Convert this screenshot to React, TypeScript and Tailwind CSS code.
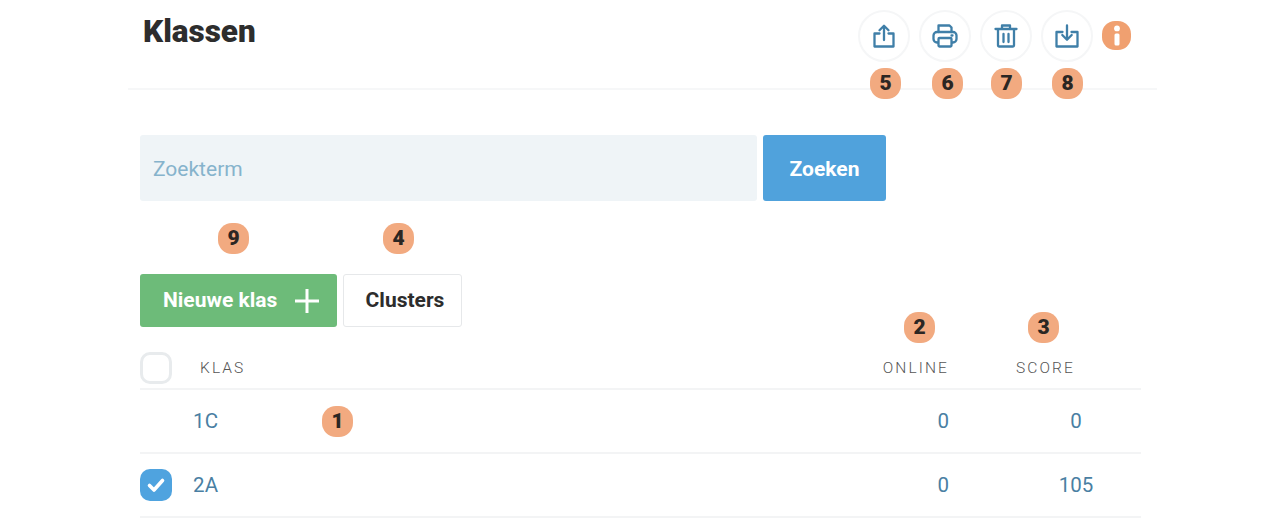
const Badge = ({ n, x, y }: { n: number; x: number; y: number }) => (
  <div
    className="absolute flex h-[31px] w-[31px] items-center justify-center rounded-[14px] bg-[#f2aa80] font-['Roboto',sans-serif] text-[21px] font-black leading-none text-[#2b2623]"
    style={{ left: x, top: y }}
  >
    {n}
  </div>
);

const IconCircle = ({ children }: { children: React.ReactNode }) => (
  <div className="flex h-[52px] w-[52px] items-center justify-center rounded-full border-2 border-[#f5f6f7] text-[#3f7fa8]">
    {children}
  </div>
);

const Svg = ({ children }: { children: React.ReactNode }) => (
  <svg width="26" height="26" viewBox="0 0 26 26" fill="none" stroke="currentColor" strokeWidth="2.3" strokeLinecap="round" strokeLinejoin="round">
    {children}
  </svg>
);

const Row = ({ name, online, score, checked }: { name: string; online: string; score: string; checked?: boolean }) => (
  <div className="flex h-[64px] items-center border-b-2 border-[#f3f4f5] text-[20.5px] text-[#4a7fa3]">
    <div className="w-[53px] shrink-0">
      {checked && (
        <div className="flex h-[32px] w-[32px] items-center justify-center rounded-[10px] bg-[#4fa3df]">
          <svg width="20" height="20" viewBox="0 0 20 20" fill="none" stroke="#fff" strokeWidth="3.6" strokeLinecap="round" strokeLinejoin="round">
            <path d="M3.5 10.5 8 15l8.5-9.5" />
          </svg>
        </div>
      )}
    </div>
    <div className="flex-1 tracking-[0.2px]">{name}</div>
    <div className="w-[40px] text-right">{online}</div>
    <div className="ml-[109px] w-[36px] text-center">{score}</div>
    <div className="w-[47px]" />
  </div>
);

export default function App() {
  return (
    <div className="relative h-[528px] w-[1280px] overflow-hidden bg-white font-['Roboto',sans-serif]">
      <header className="ml-[128px] flex h-[90px] w-[1029px] items-start border-b-2 border-[#f6f7f8] pl-[15px]">
        <h1 className="mt-[12px] text-[31.5px] font-black leading-[40px] text-[#2d2d2d]">Klassen</h1>
        <div className="ml-auto mt-[10px] flex items-start gap-[9px] pr-[26px]">
          <IconCircle>
            <Svg>
              <path d="M8.5 10.5H3.5v13h19v-13h-5" />
              <path d="M13 17V3M8.5 7.2 13 2.8l4.5 4.4" />
            </Svg>
          </IconCircle>
          <IconCircle>
            <Svg>
              <path d="M6.5 9V2.5h11l2 2V9" />
              <rect x="1.5" y="9" width="23" height="10.5" rx="3.5" />
              <rect x="6.5" y="15" width="13" height="8.5" rx="1" fill="#fff" />
              <path d="M19.5 12.5h1" />
            </Svg>
          </IconCircle>
          <IconCircle>
            <Svg>
              <path d="M2.5 6h21M9 6V2.5h8V6M5 6v16.5a1 1 0 0 0 1 1h14a1 1 0 0 0 1-1V6M10.5 11v8M15.5 11v8" />
            </Svg>
          </IconCircle>
          <IconCircle>
            <Svg>
              <path d="M8.5 9H2.5v14.5h21V9h-6" />
              <path d="M13 2.5V16.5M8.3 12 13 16.7l4.7-4.7" />
            </Svg>
          </IconCircle>
          <div className="mt-[11px] flex h-[29px] w-[29px] items-center justify-center rounded-[13px] bg-[#f0a070]">
            <svg width="8" height="21" viewBox="0 0 8 21" fill="#fff">
              <circle cx="4" cy="3.4" r="2.9" />
              <rect x="1.5" y="8.5" width="5" height="12" rx="1.5" />
            </svg>
          </div>
        </div>
      </header>

      <main className="ml-[140px] w-[1001px]">
        <div className="mt-[45px] flex gap-[6px]">
          <div className="flex h-[66px] w-[617px] items-center rounded-[3px] bg-[#eff4f7] pl-[13px] pt-[3px] text-[21px] text-[#86b3cc]">Zoekterm</div>
          <button className="h-[66px] w-[123px] rounded-[3px] bg-[#50a2dc] pt-[3px] text-[21px] font-bold text-white">Zoeken</button>
        </div>
        <div className="mt-[73px] flex gap-[6px]">
          <button className="flex h-[53px] w-[197px] items-center rounded-[3px] bg-[#6dbb79] pl-[23px] text-[21px] font-bold text-white">
            <span className="pt-[1px]">Nieuwe klas</span>
            <svg className="ml-[17px]" width="26" height="26" viewBox="0 0 26 26" stroke="#fff" strokeWidth="3">
              <path d="M13 1v24M1 13h24" />
            </svg>
          </button>
          <button className="h-[53px] w-[119px] rounded-[3px] border border-[#e6e8ea] bg-white pl-[5px] pt-[1px] text-[21px] font-bold text-[#2d2d2d]">Clusters</button>
        </div>
        <div className="mt-[25px] flex h-[38px] items-start border-b-2 border-[#f3f4f5] text-[15.5px] font-light tracking-[2.1px] text-[#555]">
          <div className="h-[32px] w-[32px] shrink-0 rounded-[10px] border-[3px] border-[#e8ebed]" />
          <div className="ml-[28px] flex-1 pt-[5px]">KLAS</div>
          <div className="pt-[5px]">ONLINE</div>
          <div className="ml-[67px] w-[125px] pt-[5px]">SCORE</div>
        </div>
        <Row name="1C" online="0" score="0" />
        <Row name="2A" online="0" score="105" checked />
      </main>

      <Badge n={5} x={870} y={68} />
      <Badge n={6} x={932} y={68} />
      <Badge n={7} x={991} y={68} />
      <Badge n={8} x={1052} y={68} />
      <Badge n={9} x={218} y={223} />
      <Badge n={4} x={383} y={223} />
      <Badge n={2} x={904} y={312} />
      <Badge n={3} x={1028} y={312} />
      <Badge n={1} x={322} y={406} />
    </div>
  );
}
